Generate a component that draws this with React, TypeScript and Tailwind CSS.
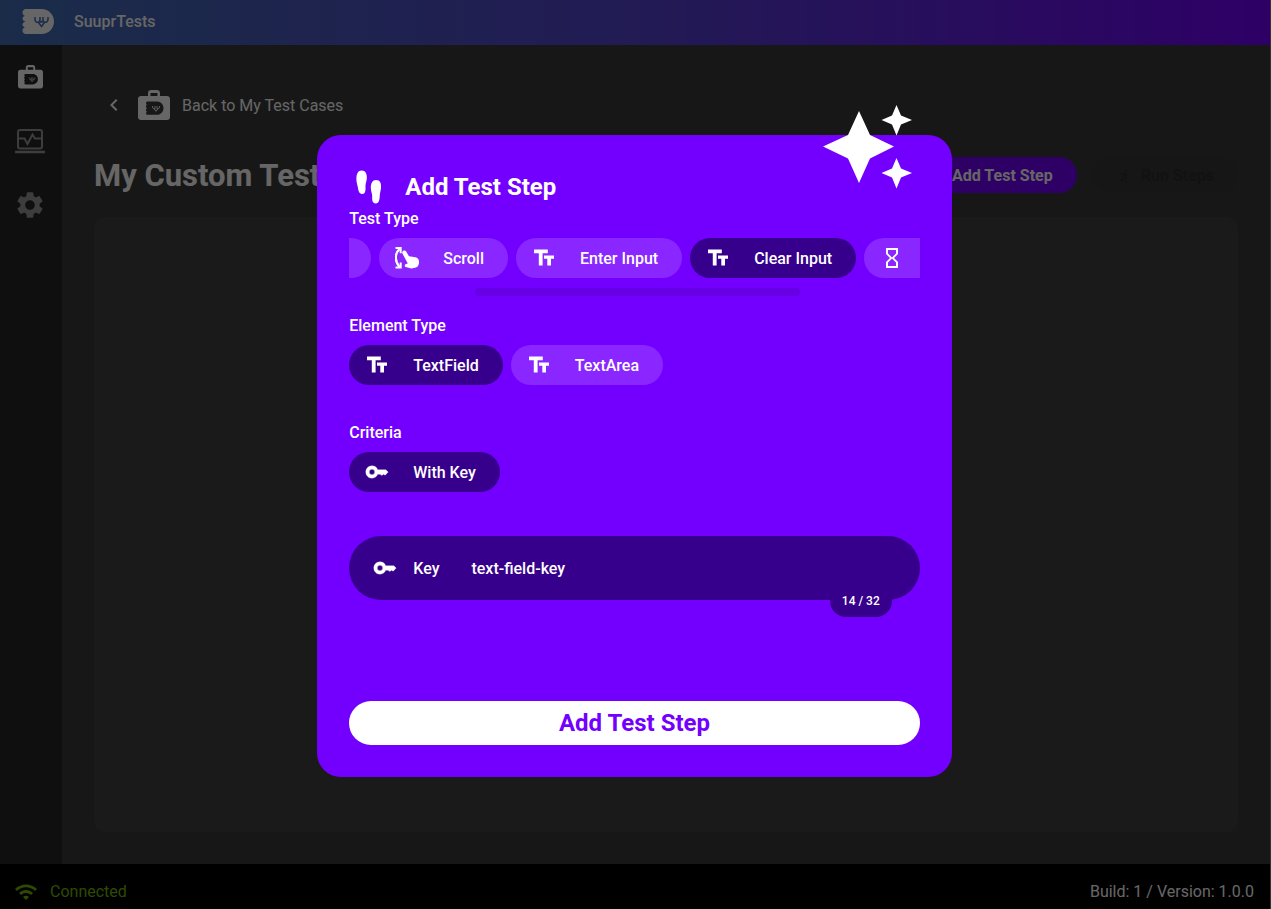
import type { ReactNode } from "react";
import {
  MdChevronLeft,
  MdDirectionsRun,
  MdHourglassEmpty,
  MdSettings,
  MdWifi,
} from "react-icons/md";

export default function App() {
  return (
    <div className="relative flex min-h-screen flex-col border-r border-[#333] bg-[#3a3a3a] text-base text-white font-[Roboto,sans-serif]">
      <header className="flex h-[45px] items-center gap-5 bg-linear-to-r/srgb from-[#426fb5] via-[#5544d2] to-[#7300ff] pb-0.5 pl-[22px]">
        <Logo className="w-8 text-white" face="#426fb5" />
        <span className="font-medium">SuuprTests</span>
      </header>

      <div className="flex flex-1">
        <nav className="flex w-[62px] flex-col bg-[#262626] pr-[2px]">
          <NavLink label="My Test Cases">
            <CaseIcon className="w-[25px] text-white" hole="#262626" />
          </NavLink>
          <NavLink label="Test Runs">
            <MonitorIcon />
          </NavLink>
          <NavLink label="Settings">
            <MdSettings className="size-8 text-[#999]" />
          </NavLink>
        </nav>

        <main className="flex flex-1 flex-col px-8 pb-8 pt-11">
          <a href="#cases" className="flex h-8 items-center self-start pl-2">
            <MdChevronLeft className="size-6" />
            <CaseIcon className="ml-3 mr-3 w-8" hole="#3a3a3a" />
            <span className="pt-0.5">Back to My Test Cases</span>
          </a>

          <div className="mt-9 flex h-9 items-center gap-4">
            <h1 className="flex-1 pt-0.5 text-[31px] font-bold leading-9">My Custom Test</h1>
            <button className="flex h-9 items-center rounded-full bg-[#7300ff] px-6 pt-0.5 font-bold">
              Add Test Step
            </button>
            <button
              className="flex h-9 items-center gap-2 rounded-full bg-[#373737] px-6 pt-0.5 font-bold text-[#2e2e2e]"
              disabled
            >
              <MdDirectionsRun className="size-4" />
              Run Steps
            </button>
          </div>

          <section className="mt-6 flex-1 rounded-xl bg-[#434343]" />
        </main>
      </div>

      <footer className="flex h-[45px] items-center bg-black px-4 pt-2.5">
        <MdWifi className="-ml-0.5 mr-3 size-6 text-[#73b900]" />
        <span className="text-[#73b900]">Connected</span>
        <span className="ml-auto">Build: 1 / Version: 1.0.0</span>
      </footer>

      <div className="absolute inset-0 flex items-center justify-center bg-black/60 pr-px pt-[3px] font-medium">
        <AddStepDialog />
      </div>
    </div>
  );
}

function AddStepDialog() {
  return (
    <div
      role="dialog"
      aria-labelledby="dialog-title"
      className="relative flex w-1/2 flex-col rounded-3xl bg-[#7300ff] p-8"
    >
      <Sparkles />

      <div className="flex h-[39px] items-center">
        <Footprints />
        <h2 id="dialog-title" className="text-2xl font-bold">
          Add Test Step
        </h2>
      </div>

      <SectionLabel>Test Type</SectionLabel>
      <div className="flex gap-2 overflow-hidden">
        <button aria-label="Tap" className="h-10 w-[22px] shrink-0 rounded-r-full bg-[#8a26ff]" />
        <Chip icon={<SwipeIcon />}>Scroll</Chip>
        <Chip icon={<TextIcon />}>Enter Input</Chip>
        <Chip icon={<TextIcon />} selected>
          Clear Input
        </Chip>
        <button
          aria-label="Wait"
          className="flex h-10 flex-1 items-center rounded-l-full bg-[#8a26ff] pl-4"
        >
          <MdHourglassEmpty className="size-6" />
        </button>
      </div>
      <div className="mb-[17px] ml-[22%] mt-[10px] h-2 w-[57%] rounded-full bg-black/10" />

      <SectionLabel>Element Type</SectionLabel>
      <div className="mb-[35px] flex gap-2">
        <Chip icon={<TextIcon />} selected>
          TextField
        </Chip>
        <Chip icon={<TextIcon />}>TextArea</Chip>
      </div>

      <SectionLabel>Criteria</SectionLabel>
      <div className="flex gap-2">
        <Chip icon={<KeyIcon />} selected>
          With Key
        </Chip>
      </div>

      <div className="relative mt-11 flex h-16 items-center rounded-full bg-[#36008c] pl-6 pr-8">
        <KeyIcon />
        <label htmlFor="key" className="ml-4 mr-8 pt-0.5">
          Key
        </label>
        <input
          id="key"
          defaultValue="text-field-key"
          maxLength={32}
          className="min-w-0 flex-1 bg-transparent pt-0.5 outline-none"
        />
        <span className="absolute right-7 top-[47px] flex h-[34px] items-center rounded-2xl bg-[#36008c] px-3 pt-0.5 text-xs">
          14 / 32
        </span>
      </div>

      <button className="mt-[101px] h-11 rounded-full bg-white text-2xl font-bold text-[#7300ff]">
        Add Test Step
      </button>
    </div>
  );
}

function NavLink({ label, children }: { label: string; children: ReactNode }) {
  return (
    <a href="#nav" aria-label={label} className="flex h-16 items-center justify-center">
      {children}
    </a>
  );
}

function SectionLabel({ children }: { children: ReactNode }) {
  return <h3 className="mb-1.5 leading-[26px]">{children}</h3>;
}

function Chip({
  icon,
  selected = false,
  children,
}: {
  icon: ReactNode;
  selected?: boolean;
  children: ReactNode;
}) {
  return (
    <button
      aria-pressed={selected}
      className={`flex h-10 shrink-0 items-center gap-6 rounded-full pl-4 pr-6 ${selected ? "bg-[#36008c]" : "bg-[#8a26ff]"}`}
    >
      {icon}
      <span className="pt-0.5">{children}</span>
    </button>
  );
}

function TextIcon() {
  return (
    <svg viewBox="0 0 24 24" className="size-6 shrink-0" fill="currentColor">
      <path d="M2 3.500V7.200H6.800V19.500H10.600V7.200H15.800V3.500ZM12 9.500V12.700H15.300V19.500H19V12.700H22V9.500Z" />
    </svg>
  );
}

function KeyIcon() {
  return (
    <svg viewBox="0 0 24 24" className="size-6 shrink-0" fill="currentColor">
      <path
        fillRule="evenodd"
        d="M7 5.800C9.700 5.800 11.900 7.400 12.700 9.700H20.800L23.200 12L20.200 15.200L18.500 14.200L16.800 15.400L15.200 14.300H12.700C11.900 16.600 9.700 18.200 7 18.200C3.500 18.200 .8 15.400 .8 12S3.500 5.800 7 5.800ZM7 9.300A2.700 2.700 0 1 0 7 14.700A2.700 2.700 0 1 0 7 9.300Z"
        stroke="currentColor"
        strokeWidth="0.300"
        strokeLinejoin="round"
      />
    </svg>
  );
}

function Logo({ className, face }: { className: string; face: string }) {
  return (
    <svg viewBox="0 0 32 25" className={className} fill="currentColor">
      <path d="M4 0H19.500C26.500 0 32 5.500 32 12.500S26.500 25 19.500 25H4C1.800 25 .5 23.500 .5 21.500C.5 20 1.500 18.700 3 18.300C1.300 17.500 .5 16.800 .5 15.800C.5 14.300 1.700 13 3.500 12.600C1.700 12 .5 11 .5 9.500C.5 8.200 1.500 7.200 2.800 6.900C1.300 6.300 .5 5 .5 3.500C.5 1.500 2 0 4 0Z" />
      <path
        d="M13 8V10.500C13 12.800 15 13.500 16.500 13.200C18 13 18 11.500 18 10V8M21 8V10C21 11.500 21 13 22.500 13.200C24 13.500 26 12.800 26 10.500V8M16.500 13.500L19.500 17.500L22.500 13.500M18 13.500L19.500 12.500L21 13.500"
        fill="none"
        stroke={face}
        strokeWidth="1.500"
      />
    </svg>
  );
}

function CaseIcon({ className, hole }: { className: string; hole: string }) {
  return (
    <svg viewBox="0 0 32 30" className={className} fill="currentColor">
      <path
        fillRule="evenodd"
        d="M10 6V3C10 1.300 11.300 0 13 0H19C20.700 0 22 1.300 22 3V6H29C30.700 6 32 7.300 32 9V27C32 28.700 30.700 30 29 30H3C1.300 30 0 28.700 0 27V9C0 7.300 1.300 6 3 6ZM12.500 6H19.500V3H12.500Z"
      />
      <path
        fill={hole}
        d="M9.500 11.500H19C23 11.500 25.500 14.500 25.500 18S23 24.800 19 24.800H9.500C8 24.800 7.500 22.500 9 21.800C7.500 21 7.500 19 9 18.300C7.500 17.500 7.500 15.500 9 14.800C7.500 14 8 11.500 9.500 11.500Z"
      />
      <path
        d="M14.500 16V17C14.500 18.500 15.500 19 17 18.800V16M21.500 16V17C21.500 18.500 20.500 19 19 18.800V16M16.300 19L18 21.300L19.700 19"
        fill="none"
        stroke="currentColor"
        strokeWidth="0.900"
      />
    </svg>
  );
}

function MonitorIcon() {
  return (
    <svg viewBox="0 0 30 25" className="w-[30px] text-[#999]" fill="none" stroke="currentColor">
      <rect x="3" y="1" width="24" height="18.500" rx="2" strokeWidth="2" />
      <path d="M3 9.500H9.500L12.500 15L17.500 5.500L20 9.500H27" strokeWidth="2" />
      <path d="M0 23H30" strokeWidth="2.600" />
    </svg>
  );
}

function Footprints() {
  return (
    <svg viewBox="0 0 56 34" className="h-[34px] w-14 shrink-0" fill="currentColor">
      <path d="M12.500 .5C16.500 .5 18.200 4 17.800 8.500C17.600 11.500 16.600 13 16.500 15.500C16.500 19.500 17 23.800 13.300 24C9.800 24.200 9.300 20 8.800 17C8.200 14 7.300 12 7.400 8.500C7.500 4 9 .5 12.500 .5Z" />
      <path d="M27 10C31.200 10 32.500 13.500 32 18C31.700 21 31 22.500 30.800 25.500C30.500 29.500 30.300 33.500 26.700 33.500C23.200 33.500 23 29.500 23.200 26.500C23.400 23.500 21.800 21.500 21.800 17.500C21.800 13.500 23.500 10 27 10Z" />
    </svg>
  );
}

function SwipeIcon() {
  return (
    <svg viewBox="0 0 24 24" className="size-6" fill="none" stroke="currentColor">
      <path d="M4.500 3C-.5 8 -.5 15 4.500 21" strokeWidth="2.400" />
      <path d="M.5 2H5.700V7.200M.5 21.500H5.700V16.500" strokeWidth="2" />
      <path
        d="M8.300 4.800C9.400 4.200 10.600 4.700 11.300 5.800L14 10.300L20.500 11.300C23.500 12 24.300 14.500 24 17L23.300 19.500C22.500 21.500 20 22 16.500 22.500L10.500 21C9.300 20.500 9.600 18.500 11 18.100L12.800 17.600L7.500 7.700C6.900 6.600 7.200 5.400 8.300 4.800Z"
        fill="currentColor"
        stroke="none"
      />
    </svg>
  );
}

function Sparkles() {
  return (
    <svg
      viewBox="0 0 89 84"
      className="absolute -top-[30px] right-10 w-[89px]"
      fill="currentColor"
    >
      <path d="M36 6L47 30L71 41.500L47 53.500L36 78L25 53.500L0 41.500L25 30Z" />
      <path d="M73.500 0L78 10.500L89 15L78 19.500L73.500 30.500L69 19.500L58.500 15L69 10.500Z" />
      <path d="M73.500 53L78 63.500L89 68L78 72.500L73.500 83.500L69 72.500L58.500 68L69 63.500Z" />
    </svg>
  );
}
